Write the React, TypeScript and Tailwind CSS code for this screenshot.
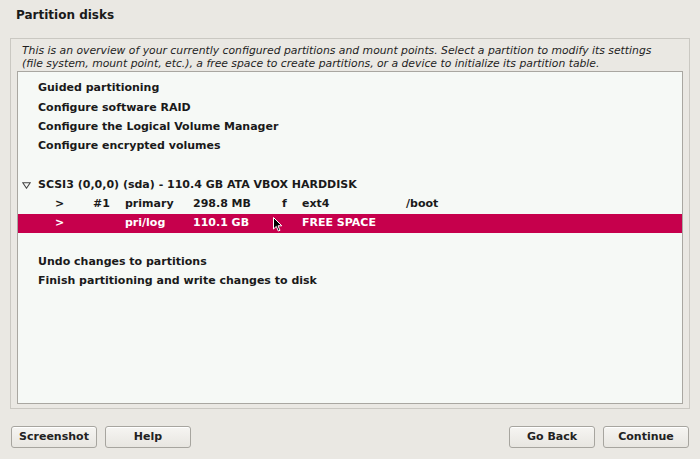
import React from "react";

const Row = ({ children, selected = false }: { children: React.ReactNode; selected?: boolean }) => (
  <div
    className={`h-[19.3px] flex items-center text-[11px] font-bold whitespace-pre ${
      selected ? "bg-[#c6004c] text-white" : "text-[#1a1a1a]"
    }`}
  >
    {children}
  </div>
);

const Btn = ({ label }: { label: string }) => (
  <div className="w-[86px] h-[22px] flex items-center justify-center rounded-[3px] border border-[#a7a59f] bg-gradient-to-b from-[#f6f5f2] to-[#e8e6e1] text-[11px] font-bold text-[#222] shadow-[inset_0_1px_0_#ffffff]">
    {label}
  </div>
);

export default function App() {
  return (
    <div className="w-[700px] h-[459px] bg-[#eae8e3] flex flex-col font-['DejaVu_Sans',sans-serif] overflow-hidden">
      <div className="h-[30px] pl-[16px] flex items-center text-[12px] font-bold text-[#1a1a1a]">
        Partition disks
      </div>
      <div className="mx-[10px] mt-[8px] h-[371px] border border-[#cac8c2] flex flex-col">
        <div className="pl-[11px] pt-[4.5px] h-[32px] text-[10.8px] italic leading-[13px] text-[#1e1e1e]">
          <div>This is an overview of your currently configured partitions and mount points. Select a partition to modify its settings</div>
          <div>(file system, mount point, etc.), a free space to create partitions, or a device to initialize its partition table.</div>
        </div>
        <div className="relative mx-[6px] mb-[4px] flex-1 border border-[#a9a7a1] bg-[#f6f9f6] pt-[7px]">
          <Row>
            <span className="pl-[20px]">Guided partitioning</span>
          </Row>
          <Row>
            <span className="pl-[20px]">Configure software RAID</span>
          </Row>
          <Row>
            <span className="pl-[20px]">Configure the Logical Volume Manager</span>
          </Row>
          <Row>
            <span className="pl-[20px]">Configure encrypted volumes</span>
          </Row>
          <Row>
            <span> </span>
          </Row>
          <Row>
            <span className="w-[20px] pl-[4px] flex items-center">
              <svg width="9" height="7" viewBox="0 0 9 7">
                <path d="M0.8 0.8 L8.2 0.8 L4.5 6.2 Z" fill="none" stroke="#444" strokeWidth="1.1" />
              </svg>
            </span>
            <span>SCSI3 (0,0,0) (sda) - 110.4 GB ATA VBOX HARDDISK</span>
          </Row>
          <Row>
            <span className="w-[75px] pl-[37px]">&gt;</span>
            <span className="w-[32px]">#1</span>
            <span className="w-[68px]">primary</span>
            <span className="w-[89px]">298.8 MB</span>
            <span className="w-[20px]">f</span>
            <span className="w-[104px]">ext4</span>
            <span>/boot</span>
          </Row>
          <Row selected>
            <span className="w-[75px] pl-[37px]">&gt;</span>
            <span className="w-[32px]"></span>
            <span className="w-[68px]">pri/log</span>
            <span className="w-[109px]">110.1 GB</span>
            <span>FREE SPACE</span>
          </Row>
          <Row>
            <span> </span>
          </Row>
          <Row>
            <span className="pl-[20px]">Undo changes to partitions</span>
          </Row>
          <Row>
            <span className="pl-[20px]">Finish partitioning and write changes to disk</span>
          </Row>
          <svg
            className="absolute left-[255px] top-[145px]"
            width="10"
            height="15"
            viewBox="0 0 10 15"
          >
            <path d="M0.5 0.5 L0.5 12 L3.3 9.4 L5.3 14 L7 13.3 L5 8.8 L8.8 8.8 Z" fill="#000" stroke="#fff" strokeWidth="1" />
          </svg>
        </div>
      </div>
      <div className="flex-1 flex items-start px-[11px] pt-[17px]">
        <div className="flex gap-[8px]">
          <Btn label="Screenshot" />
          <Btn label="Help" />
        </div>
        <div className="ml-auto flex gap-[8px]">
          <Btn label="Go Back" />
          <Btn label="Continue" />
        </div>
      </div>
    </div>
  );
}
